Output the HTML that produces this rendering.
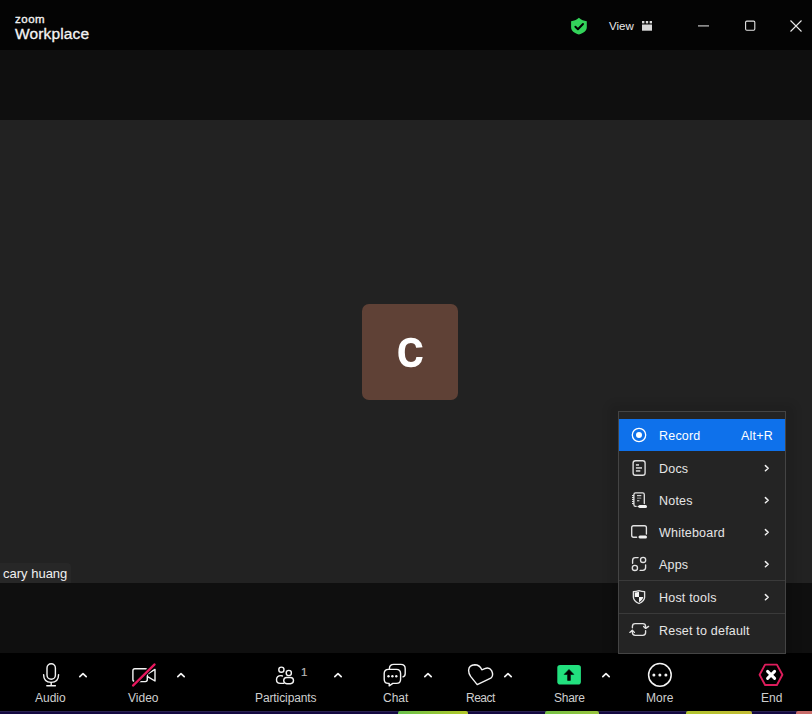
<!DOCTYPE html>
<html><head><meta charset="utf-8">
<style>
*{margin:0;padding:0;box-sizing:border-box}
html,body{width:812px;height:714px;overflow:hidden;background:#000;font-family:"Liberation Sans",sans-serif}
.abs{position:absolute}
#title{left:0;top:0;width:812px;height:50px;background:#040404}
#bandT{left:0;top:50px;width:812px;height:70px;background:#0f0f0f}
#main{left:0;top:120px;width:812px;height:463px;background:#222222}
#bandB{left:0;top:583px;width:812px;height:70px;background:#0f0f0f}
#tool{left:0;top:653px;width:812px;height:58px;background:#000}
#strip{left:0;top:711px;width:812px;height:3px;background:linear-gradient(#2a2252 0,#2a2252 1px,#140a42 1px)}
.txt{white-space:nowrap;line-height:1}
.lbl{color:#cfcfcf;font-size:12px}
.menuitem{color:#e6e6e6;font-size:12.5px;letter-spacing:0.2px}
svg{position:absolute;overflow:visible}
</style></head><body>
<div id="title" class="abs"></div>
<div id="bandT" class="abs"></div>
<div id="main" class="abs"></div>
<div id="bandB" class="abs"></div>
<div id="tool" class="abs"></div>
<div id="strip" class="abs">
  <div class="abs" style="left:398px;top:0;width:70px;height:3px;background:linear-gradient(90deg,#68c14c,#b4c828);border-radius:2px 2px 0 0"></div>
  <div class="abs" style="left:545px;top:0;width:54px;height:3px;background:linear-gradient(90deg,#74c146,#98c43c);border-radius:2px 2px 0 0"></div>
  <div class="abs" style="left:686px;top:0;width:66px;height:3px;background:linear-gradient(90deg,#b0c42e,#c4bc34);border-radius:2px 2px 0 0"></div>
  <div class="abs" style="left:796px;top:0;width:16px;height:3px;background:#c86c6a;border-radius:2px 0 0 0"></div>
</div>

<!-- title bar -->
<div class="abs txt" style="left:15px;top:13.5px;color:#f2f2f2;font-size:11.5px;letter-spacing:0.5px;-webkit-text-stroke:0.35px #f2f2f2">zoom</div>
<div class="abs txt" style="left:15px;top:26px;color:#f4f4f4;font-size:15.5px;letter-spacing:0.15px;-webkit-text-stroke:0.3px #f4f4f4">Workplace</div>

<div class="abs txt" style="left:609px;top:20.5px;color:#e8e8e8;font-size:11.5px">View</div>
<!-- avatar -->
<div class="abs" style="left:362px;top:304px;width:96px;height:96px;background:#5f4136;border-radius:7px"></div>
<div class="abs txt" style="left:362px;top:322px;width:96px;text-align:center;color:#fff;font-size:52px;-webkit-text-stroke:1.6px #fff">c</div>

<!-- name label -->
<div class="abs" style="left:0;top:563px;width:71px;height:20px;background:#272727;border-radius:0 4px 0 0"></div>
<div class="abs txt" style="left:3px;top:567px;color:#f0f0f0;font-size:13px">cary huang</div>

<!-- menu -->
<div class="abs" style="left:608px;top:403px;width:188px;height:258px;background:rgba(0,0,0,0.08);border-radius:8px;filter:blur(3px)"></div>
<div class="abs" style="left:618px;top:411px;width:168px;height:243px;background:#242424;border:1px solid #444444"></div>
<div class="abs" style="left:619px;top:419px;width:166px;height:32px;background:#0e71eb"></div>
<div class="abs" style="left:619px;top:580px;width:166px;height:1px;background:#3a3a3a"></div>
<div class="abs" style="left:619px;top:613px;width:166px;height:1px;background:#3a3a3a"></div>

<div class="abs txt menuitem" style="left:659px;top:430px;color:#fff">Record</div>
<div class="abs txt menuitem" style="left:741px;top:430px;color:#fff">Alt+R</div>
<div class="abs txt menuitem" style="left:659px;top:463px">Docs</div>
<div class="abs txt menuitem" style="left:659px;top:495px">Notes</div>
<div class="abs txt menuitem" style="left:659px;top:527px">Whiteboard</div>
<div class="abs txt menuitem" style="left:659px;top:559px">Apps</div>
<div class="abs txt menuitem" style="left:659px;top:592px">Host tools</div>
<div class="abs txt menuitem" style="left:659px;top:625px">Reset to default</div>

<div class="abs txt" style="left:301px;top:667px;color:#b8b8b8;font-size:11.5px;-webkit-text-stroke:0.2px #b8b8b8">1</div>
<!-- toolbar labels -->
<div class="abs txt lbl" style="left:35px;top:692px">Audio</div>
<div class="abs txt lbl" style="left:128px;top:692px">Video</div>
<div class="abs txt lbl" style="left:255px;top:692px;letter-spacing:-0.1px">Participants</div>
<div class="abs txt lbl" style="left:383px;top:692px">Chat</div>
<div class="abs txt lbl" style="left:466px;top:692px;letter-spacing:-0.5px">React</div>
<div class="abs txt lbl" style="left:554px;top:692px;letter-spacing:-0.25px">Share</div>
<div class="abs txt lbl" style="left:646px;top:692px">More</div>
<div class="abs txt lbl" style="left:761px;top:692px">End</div>


<svg id="ov" style="left:0;top:0" width="812" height="714" viewBox="0 0 812 714">
<!-- title shield -->
<path d="M578.9 17.7 C581.5 19.8 583.8 20.8 586.8 21.2 L586.8 27.2 C586.8 30.8 583.6 33.2 578.9 34.5 C574.2 33.2 571.1 30.8 571.1 27.2 L571.1 21.2 C574 20.8 576.3 19.8 578.9 17.7 Z" fill="#33d35a"/>
<path d="M575.4 26.8 L577.9 29.2 L583 24" stroke="#000" stroke-width="2" fill="none" stroke-linecap="round" stroke-linejoin="round"/>
<!-- view grid icon -->
<rect x="642" y="21" width="2.4" height="2.4" fill="#d8d8d8"/>
<rect x="645.8" y="21" width="2.4" height="2.4" fill="#d8d8d8"/>
<rect x="649.6" y="21" width="2.4" height="2.4" fill="#d8d8d8"/>
<rect x="642" y="24.5" width="10" height="6.2" fill="#d8d8d8"/>
<!-- window controls -->
<rect x="698" y="25.3" width="11" height="1.2" fill="#c4c4c4"/>
<rect x="745.6" y="21.1" width="9.2" height="9.2" rx="1.2" fill="none" stroke="#e4e4e4" stroke-width="1.1"/>
<path d="M790.5 20.5 L801.5 31.5 M801.5 20.5 L790.5 31.5" stroke="#e8e8e8" stroke-width="1.1"/>

<!-- menu icons -->
<g fill="none" stroke="#f2f2f2" stroke-width="1.3">
  <circle cx="639" cy="435" r="6.7" stroke="#fff"/>
</g>
<circle cx="639" cy="435" r="3" fill="#fff"/>
<g fill="none" stroke="#e2e2e2" stroke-width="1.35" stroke-linecap="round" stroke-linejoin="round">
  <!-- docs -->
  <rect x="633.1" y="460.7" width="12" height="14.5" rx="2.3"/>
  <!-- whiteboard -->
  <path d="M636.6 537.2 L633.6 537.2 Q631.7 537.2 631.7 535.3 L631.7 527.6 Q631.7 525.7 633.6 525.7 L644.5 525.7 Q646.4 525.7 646.4 527.6 L646.4 534"/>
  <!-- apps -->
  <path d="M632.6 563.2 L632.6 560.4 Q632.6 557.6 635.4 557.6 L638.1 557.6"/>
  <circle cx="643.1" cy="559.9" r="2.6"/>
  <circle cx="634.9" cy="567.9" r="2.6"/>
  <path d="M645.6 564.8 L645.6 567.6 Q645.6 570.4 642.8 570.4 L640.1 570.4"/>
  <!-- shield -->
  <path d="M639 590.6 Q641.8 591.6 644.6 591.6 L644.6 597.2 Q644.6 601 639 603.5 Q633.4 601 633.4 597.2 L633.4 591.6 Q636.2 591.6 639 590.6 Z"/>
  <!-- reset -->
  <path d="M632.4 627.8 L632.4 626.4 Q632.4 623.6 635.2 623.6 L642.8 623.6 Q645.6 623.6 645.6 626.4 L645.6 628.2"/>
  <path d="M643.6 626.4 L645.7 628.4 L648.6 626.4"/>
  <path d="M645.6 630.6 L645.6 632.6 Q645.6 635.4 642.8 635.4 L635.2 635.4 Q632.4 635.4 632.4 632.6 L632.4 630.4"/>
  <path d="M629.8 632.4 L632.3 630.2 L634.4 632.4"/>
</g>
<!-- docs lines -->
<g fill="#dcdcdc">
  <rect x="635.9" y="464.2" width="3.1" height="1.5"/>
  <rect x="635.9" y="467.2" width="6.1" height="1.5"/>
  <rect x="635.9" y="470.2" width="4.4" height="1.5"/>
</g>
<!-- whiteboard pen -->
<path d="M638.2 537.1 L639.6 535.6 L645.6 535.6 Q647 535.6 647 537.1 Q647 538.6 645.6 538.6 L639.6 538.6 Z" fill="#f0f0f0"/>
<!-- notes -->
<g fill="none" stroke="#e2e2e2" stroke-width="1.3" stroke-linecap="round">
  <path d="M636.2 506.3 L635.5 506.3 Q633.9 506.3 633.9 504.7 L633.9 494.5 Q633.9 492.8 635.6 492.8 L642.6 492.8 Q644.3 492.8 644.3 494.5 L644.3 503.6"/>
</g>
<g fill="#e2e2e2">
  <rect x="632" y="495" width="2" height="1.1"/>
  <rect x="632" y="497" width="2" height="1.1"/>
  <rect x="632" y="499" width="2" height="1.1"/>
  <rect x="632" y="501" width="2" height="1.1"/>
  <rect x="632" y="503" width="2" height="1.1"/>
  <rect x="637" y="495.1" width="4.3" height="1.1"/>
  <rect x="637" y="497.6" width="4.3" height="1.1" fill="#9a9a9a"/>
  <rect x="637" y="500.2" width="2.4" height="1.1"/>
</g>
<path d="M637.2 506.4 L639.6 504.9 L645.6 504.9 Q647 504.9 647 506.4 Q647 507.9 645.6 507.9 L639.6 507.9 Z" fill="#f2f2f2"/>
<!-- shield quadrants -->
<path d="M634.8 592.6 Q637 592.4 639 591.8 L639 597 L634.8 597 Z" fill="#f4f4f4"/>
<path d="M639 597 L643.2 597 Q642.8 600 639 602.2 Z" fill="#f4f4f4"/>

<!-- chevrons -->
<g fill="none" stroke="#f0f0f0" stroke-width="1.5" stroke-linecap="round" stroke-linejoin="round">
  <path d="M765.4 465.6 L768.2 468.2 L765.4 470.8"/>
  <path d="M765.4 497.6 L768.2 500.2 L765.4 502.8"/>
  <path d="M765.4 529.6 L768.2 532.2 L765.4 534.8"/>
  <path d="M765.4 561.6 L768.2 564.2 L765.4 566.8"/>
  <path d="M765.4 594.6 L768.2 597.2 L765.4 599.8"/>
</g>

<!-- toolbar icons -->
<g fill="none" stroke="#f4f4f4" stroke-width="1.4" stroke-linecap="round" stroke-linejoin="round">
  <!-- mic -->
  <rect x="47" y="663.7" width="8.4" height="15.6" rx="4.2"/>
  <path d="M43.6 674.6 Q43.6 682.4 51.2 682.4 Q58.6 682.4 58.6 674.6"/>
  <path d="M51.2 682.4 L51.2 685.8 M46.8 685.8 L55.4 685.8"/>
  <!-- carets -->
  
  
  
  
  
  
  <!-- video -->
  <rect x="132.9" y="668.8" width="14.4" height="12.8" rx="2"/>
  <path d="M148 673.6 L155 669.4 L155 681 L148 676.8"/>
  <!-- participants -->
  <circle cx="281.4" cy="669.7" r="2.6"/>
  <circle cx="288.8" cy="673" r="2.6"/>
  <path d="M282.4 676 Q281.6 675.6 281 675.6 Q276.5 675.6 276.5 679.8 Q276.5 683.4 280.4 683.4 L283.6 683.4"/>
  <rect x="283.7" y="677.5" width="9.8" height="6.2" rx="3.1"/>
  <!-- chat -->
  <path d="M389.4 668.8 Q389.4 664.4 393.8 664.4 L400.8 664.4 Q405.2 664.4 405.2 668.8 L405.2 673.4 Q405.2 676.2 403 676.9"/>
  <path d="M389.2 683.4 L388.4 683.4 Q384.2 683.4 384.2 679.2 L384.2 673.6 Q384.2 669.4 388.4 669.4 L396.4 669.4 Q400.6 669.4 400.6 673.6 L400.6 679.2 Q400.6 683.4 396.4 683.4 L392.8 683.4 L389.2 685.8 Z"/>
  <!-- heart -->
  <path d="M477.2 684.6 L490.8 678.2 Q494 675.6 491.6 670.6 Q489.2 666.8 484.8 668.6 L481.8 669.8 Q479.6 664.8 474.8 664.8 Q469 665.2 468.6 670.2 Q468.6 673.6 470.6 676.4 Z"/>
  <!-- more -->
  <circle cx="659.9" cy="674.9" r="11.3" stroke-width="1.5"/>
</g>
<g fill="#f4f4f4">
  <circle cx="388.5" cy="676.3" r="1.2"/>
  <circle cx="392.4" cy="676.3" r="1.2"/>
  <circle cx="396.3" cy="676.3" r="1.2"/>
  <circle cx="653.9" cy="675" r="1.5"/>
  <circle cx="659.9" cy="675" r="1.5"/>
  <circle cx="665.9" cy="675" r="1.5"/>
</g>
<g fill="none" stroke="#f4f4f4" stroke-width="1.7" stroke-linecap="round" stroke-linejoin="round"><path d="M79.8 676.6 L83 673.6 L86.2 676.6"/><path d="M177.8 676.6 L181 673.6 L184.2 676.6"/><path d="M334.8 676.6 L338 673.6 L341.2 676.6"/><path d="M424.8 676.6 L428 673.6 L431.2 676.6"/><path d="M504.8 676.6 L508 673.6 L511.2 676.6"/><path d="M602.8 676.6 L606 673.6 L609.2 676.6"/></g>
<!-- video slash -->
<path d="M133 685.6 L154.6 664.4" stroke="#000" stroke-width="4.6" stroke-linecap="butt"/>
<path d="M133 685.6 L154.6 664.4" stroke="#e8175d" stroke-width="2.2" stroke-linecap="round"/>
<!-- participants 1 -->
<!-- share -->
<rect x="557.3" y="665" width="23.6" height="19.6" rx="2.8" fill="#22e07e"/>
<path d="M569 669.4 L573.8 674.4 L570.4 674.4 L570.4 680.4 L567.6 680.4 L567.6 674.4 L564.2 674.4 Z" fill="#000" stroke="#000" stroke-width="0.6" stroke-linejoin="round"/>
<!-- end -->
<path d="M765.1 664.6 L776.9 664.6 L782.4 674.8 L776.9 685 L765.1 685 L759.6 674.8 Z" fill="none" stroke="#dd1d5c" stroke-width="1.9" stroke-linejoin="round"/>
<path d="M767.6 671.4 L774.6 678.4 M774.6 671.4 L767.6 678.4" stroke="#fff" stroke-width="3" stroke-linecap="round"/>
</svg>
</body></html>
